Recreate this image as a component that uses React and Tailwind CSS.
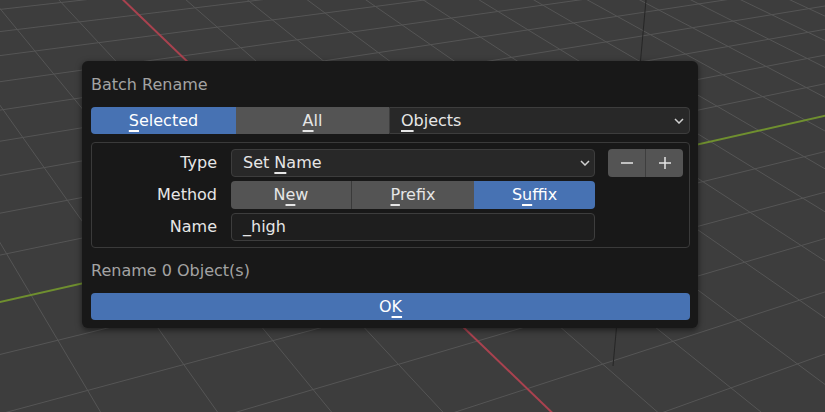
// perspective floor grid of the viewport, projected from ground plane (u, v)
const project = (u, v) => {
  const w = 1 - 0.04215 * u - 0.03143 * v;
  return [(354 + 21.08 * u - 81.72 * v) / w, (222 + 25.29 * u + 8.958 * v) / w];
};

const gridLines = (() => {
  const lines = [];
  for (let u = -60; u <= 24; u++) {
    const near = (0.97 - 0.04215 * u) / 0.03143;
    const [x1, y1] = project(u, -300);
    const [x2, y2] = project(u, near);
    lines.push({ id: `u${u}`, x1, y1, x2, y2, axis: u === 0 ? "y" : null });
  }
  for (let v = -60; v <= 32; v++) {
    const near = (0.97 - 0.03143 * v) / 0.04215;
    const [x1, y1] = project(-300, v);
    const [x2, y2] = project(near, v);
    lines.push({ id: `v${v}`, x1, y1, x2, y2, axis: v === 0 ? "x" : null });
  }
  return lines;
})();

function Viewport() {
  const plain = gridLines.filter((l) => !l.axis);
  const xAxis = gridLines.find((l) => l.axis === "x");
  const yAxis = gridLines.find((l) => l.axis === "y");
  return (
    <svg className="absolute inset-0" width="825" height="412" viewBox="0 0 825 412">
      {plain.map((l) => (
        <line key={l.id} x1={l.x1} y1={l.y1} x2={l.x2} y2={l.y2} stroke="#555555" strokeWidth="1" />
      ))}
      <line x1={yAxis.x1} y1={yAxis.y1} x2={yAxis.x2} y2={yAxis.y2} stroke="#6f8f2f" strokeWidth="2" />
      <line x1={xAxis.x1} y1={xAxis.y1} x2={xAxis.x2} y2={xAxis.y2} stroke="#a9424f" strokeWidth="2" />
      <line x1="646" y1="0" x2="613" y2="366" stroke="#262626" strokeWidth="1" />
    </svg>
  );
}

const U = ({ children }) => (
  <span className="underline decoration-[1.5px] underline-offset-[4px]">{children}</span>
);

const Chevron = () => (
  <svg width="10" height="6" viewBox="0 0 10 6" className="shrink-0">
    <polyline points="1,1 5,5 9,1" fill="none" stroke="#d0d0d0" strokeWidth="1.5" />
  </svg>
);

const fields = [
  { label: "Type", kind: "menu" },
  { label: "Method", kind: "method" },
  { label: "Name", kind: "text" },
];

function Field({ kind }) {
  if (kind === "menu") {
    return (
      <div className="flex h-full w-full items-center justify-between rounded-[4px] border border-[#3d3d3d] bg-[#282828] pl-[11px] pr-[4px] text-[#e6e6e6]">
        <span>
          Set <U>N</U>ame
        </span>
        <Chevron />
      </div>
    );
  }
  if (kind === "method") {
    return (
      <div className="flex h-full w-full text-[#e6e6e6]">
        <div className="flex w-[121px] items-center justify-center rounded-l-[4px] border-r border-[#3a3a3a] bg-[#545454]">
          <span>
            N<U>e</U>w
          </span>
        </div>
        <div className="flex w-[122px] items-center justify-center bg-[#545454]">
          <span>
            <U>P</U>refix
          </span>
        </div>
        <div className="flex flex-1 items-center justify-center rounded-r-[4px] bg-[#4772b3] text-white">
          <span>
            S<U>u</U>ffix
          </span>
        </div>
      </div>
    );
  }
  return (
    <div className="flex h-full w-full items-center rounded-[4px] border border-[#3d3d3d] bg-[#1e1e1e] pl-[11px] text-[#e6e6e6]">
      _high
    </div>
  );
}

export default function App() {
  return (
    <div className="relative h-[412px] w-[825px] overflow-hidden bg-[#3d3d3d] font-['DejaVu_Sans',sans-serif] text-[16px] leading-none">
      <Viewport />
      <div className="relative pl-[82px] pt-[61px]">
        <div className="w-[616px] rounded-[6px] bg-[#181818] pb-[8px] pl-[9px] pr-[8px] pt-[10px] shadow-[0_2px_6px_rgba(0,0,0,0.55)]">
          <div className="flex h-[27px] items-center text-[#a3a3a3]">Batch Rename</div>

          <div className="mt-[9px] flex h-[27px]">
            <div className="flex w-[145px] items-center justify-center rounded-l-[4px] bg-[#4772b3] text-white">
              <span>
                <U>S</U>elected
              </span>
            </div>
            <div className="flex w-[153px] items-center justify-center bg-[#545454] text-[#e6e6e6]">
              <span>
                <U>A</U>ll
              </span>
            </div>
            <div className="flex flex-1 items-center justify-between rounded-r-[4px] border border-[#3d3d3d] bg-[#282828] pl-[11px] pr-[5px] text-[#e6e6e6]">
              <span>
                <U>O</U>bjects
              </span>
              <Chevron />
            </div>
          </div>

          <div className="mt-[8px] flex rounded-[4px] border border-[#3a3a3a] py-[6px]">
            <div className="flex flex-col gap-[4px]">
              {fields.map((f) => (
                <div key={f.label} className="flex h-[28px] items-center">
                  <div className="w-[125px] text-right text-[#e6e6e6]">{f.label}</div>
                  <div className="ml-[14px] h-full w-[364px]">
                    <Field kind={f.kind} />
                  </div>
                </div>
              ))}
            </div>
            <div className="ml-[13px] flex h-[28px] w-[75px] rounded-[4px] bg-[#545454]">
              <div className="flex flex-1 items-center justify-center border-r border-[#3e3e3e]">
                <svg width="14" height="14" viewBox="0 0 14 14">
                  <line x1="1" y1="7" x2="13" y2="7" stroke="#e6e6e6" strokeWidth="1.5" />
                </svg>
              </div>
              <div className="flex flex-1 items-center justify-center">
                <svg width="14" height="14" viewBox="0 0 14 14">
                  <line x1="1" y1="7" x2="13" y2="7" stroke="#e6e6e6" strokeWidth="1.5" />
                  <line x1="7" y1="1" x2="7" y2="13" stroke="#e6e6e6" strokeWidth="1.5" />
                </svg>
              </div>
            </div>
          </div>

          <div className="mt-[9px] flex h-[27px] items-center text-[#a3a3a3]">Rename 0 Object(s)</div>

          <div className="mt-[9px] flex h-[27px] items-center justify-center rounded-[4px] bg-[#4772b3] text-white">
            <span>
              O<U>K</U>
            </span>
          </div>
        </div>
      </div>
    </div>
  );
}
